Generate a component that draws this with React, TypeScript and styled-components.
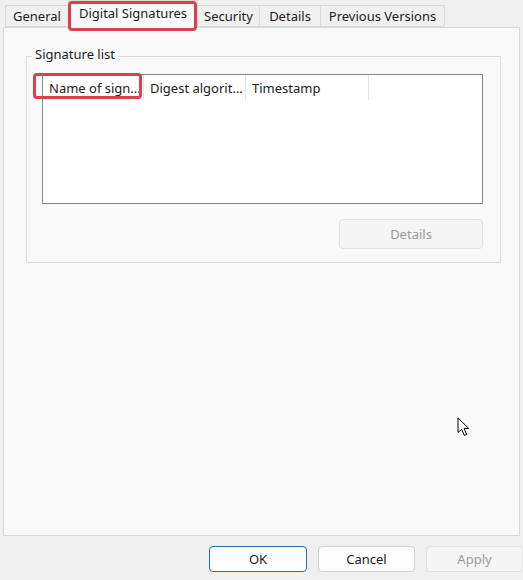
import React from "react";
import styled, { createGlobalStyle } from "styled-components";

const Global = createGlobalStyle`
  html, body { margin: 0; padding: 0; background: #f0f0f0; }
  body { font-family: "Segoe UI", "Noto Sans", "Liberation Sans", Arial, sans-serif; }
`;

const Window = styled.div`
  position: relative;
  width: 523px;
  height: 580px;
  background: #f0f0f0;
  overflow: hidden;
  color: #1b1b1b;
  font-size: 13px;
  display: flex;
  flex-direction: column;
`;

const TabStrip = styled.div`
  display: flex;
  align-items: flex-end;
  height: 27px;
  padding-left: 5px;
  position: relative;
  z-index: 2;
`;

const Tab = styled.div<{ $w: number; $active?: boolean }>`
  width: ${(p) => p.$w}px;
  height: ${(p) => (p.$active ? 28 : 22)}px;
  margin-bottom: ${(p) => (p.$active ? -1 : 0)}px;
  box-sizing: border-box;
  display: flex;
  align-items: center;
  justify-content: center;
  padding-bottom: ${(p) => (p.$active ? 4 : 0)}px;
  background: ${(p) => (p.$active ? "#f9f9f9" : "#f0f0f0")};
  border: 1px solid #d9d9d9;
  border-bottom: ${(p) => (p.$active ? "none" : "1px solid #d9d9d9")};
  margin-right: -1px;
  position: relative;
  white-space: nowrap;
`;

const Panel = styled.div`
  margin: 0 3px;
  height: 509px;
  box-sizing: border-box;
  background: #f9f9f9;
  border: 1px solid #d9d9d9;
  padding: 28px 0 0 22px;
`;

const Group = styled.div`
  position: relative;
  width: 475px;
  height: 207px;
  box-sizing: border-box;
  border: 1px solid #dcdcdc;
  padding: 17px 0 0 15px;
`;

const GroupLabel = styled.span`
  position: absolute;
  top: -11px;
  left: 5px;
  padding: 0 3px;
  background: #f9f9f9;
  line-height: 16px;
`;

const ListBox = styled.div`
  width: 441px;
  height: 130px;
  box-sizing: border-box;
  background: #ffffff;
  border: 1px solid #828790;
`;

const HeaderRow = styled.div`
  display: flex;
  height: 25px;
  align-items: stretch;
`;

const HeaderCell = styled.div<{ $w: number }>`
  width: ${(p) => p.$w}px;
  box-sizing: border-box;
  padding-left: 6px;
  display: flex;
  align-items: center;
  border-right: 1px solid #e5e5e5;
  white-space: nowrap;
  overflow: hidden;
`;

const GroupFooter = styled.div`
  display: flex;
  justify-content: flex-end;
  padding: 15px 17px 0 0;
`;

const Button = styled.button<{ $primary?: boolean; $w?: number }>`
  width: ${(p) => p.$w ?? 97}px;
  height: 30px;
  box-sizing: border-box;
  font: inherit;
  font-size: 13px;
  border-radius: 4px;
  border: 1px solid ${(p) => (p.$primary ? "#2a6f97" : "#d0d0d0")};
  background: #fdfdfd;
  color: #1b1b1b;
  padding: 0;
  &:disabled {
    background: #f5f5f5;
    border-color: #e3e3e3;
    color: #9a9a9a;
  }
`;

const Footer = styled.div`
  display: flex;
  gap: 11px;
  padding: 10px 0 0 209px;
  & > button { height: 26px; }
`;

const Highlight = styled.div<{ $x: number; $y: number; $w: number; $h: number }>`
  position: absolute;
  left: ${(p) => p.$x}px;
  top: ${(p) => p.$y}px;
  width: ${(p) => p.$w}px;
  height: ${(p) => p.$h}px;
  box-sizing: border-box;
  border: 3px solid #d8434b;
  border-radius: 4px;
  z-index: 5;
  pointer-events: none;
`;

const Cursor = styled.svg`
  position: absolute;
  left: 457px;
  top: 417px;
  z-index: 6;
`;

export default function App() {
  return (
    <Window>
      <Global />
      <TabStrip>
        <Tab $w={64}>General</Tab>
        <Tab $w={130} $active>Digital Signatures</Tab>
        <Tab $w={63}>Security</Tab>
        <Tab $w={62}>Details</Tab>
        <Tab $w={125}>Previous Versions</Tab>
      </TabStrip>
      <Panel>
        <Group>
          <GroupLabel>Signature list</GroupLabel>
          <ListBox>
            <HeaderRow>
              <HeaderCell $w={101}>Name of sign...</HeaderCell>
              <HeaderCell $w={102}>Digest algorit...</HeaderCell>
              <HeaderCell $w={123}>Timestamp</HeaderCell>
            </HeaderRow>
          </ListBox>
          <GroupFooter>
            <Button $w={144} disabled>Details</Button>
          </GroupFooter>
        </Group>
      </Panel>
      <Footer>
        <Button $primary $w={98}>OK</Button>
        <Button $w={97}>Cancel</Button>
        <Button $w={97} disabled>Apply</Button>
      </Footer>
      <Highlight $x={68} $y={1} $w={129} $h={30} />
      <Highlight $x={33} $y={73} $w={109} $h={26} />
      <Cursor width="14" height="20" viewBox="0 0 14 20">
        <path
          d="M1 1 L1 15.5 L4.6 12.3 L7.3 18.4 L9.6 17.4 L7 11.5 L11.8 11.5 Z"
          fill="#ffffff"
          stroke="#000000"
          strokeWidth="1"
          strokeLinejoin="round"
        />
      </Cursor>
    </Window>
  );
}
